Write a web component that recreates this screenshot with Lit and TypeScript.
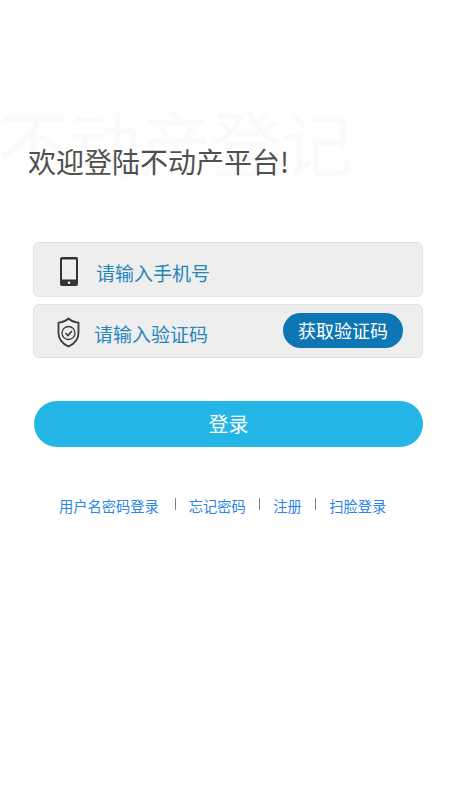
import { LitElement, html, css } from "lit";
import { customElement } from "lit/decorators.js";

@customElement("app-root")
export class AppRoot extends LitElement {
  static styles = css`
    :host {
      display: block;
      width: 455px;
      height: 795px;
      background: #fff;
      overflow: hidden;
      font-family: "Noto Sans CJK SC", "Liberation Sans", sans-serif;
    }
    .page {
      position: relative;
      display: flex;
      flex-direction: column;
      height: 795px;
      box-sizing: border-box;
      padding-top: 141px;
    }
    .watermark {
      position: absolute;
      left: -2px;
      top: 90px;
      font-size: 71px;
      line-height: 100px;
      color: #fafafa;
      white-space: nowrap;
    }
    .title {
      position: relative;
      margin: 0 0 0 28px;
      font-size: 28px;
      line-height: 40px;
      font-weight: 400;
      color: #505050;
      white-space: nowrap;
    }
    .fields {
      display: flex;
      flex-direction: column;
      gap: 7px;
      margin: 61px 32px 0 33px;
    }
    .field {
      display: flex;
      align-items: center;
      box-sizing: border-box;
      background: #eeeeee;
      border: 1px solid #e3e3e3;
      border-radius: 6px;
    }
    .phone { height: 55px; padding-left: 26px; }
    .code { height: 54px; padding-left: 23px; padding-right: 19px; }
    .ph {
      font-size: 19px;
      line-height: 26px;
      color: #2585bd;
      white-space: nowrap;
    }
    .phone .ph { margin-left: 18px; position: relative; top: 3px; }
    .code .ph { margin-left: 14px; position: relative; top: 3px; flex: 1; }
    svg { display: block; flex: none; }
    .phone svg { margin-top: 3px; }
    .code svg { margin-top: 3px; }
    .send {
      width: 120px;
      height: 35px;
      border-radius: 18px;
      background: #0e76b4;
      color: #fff;
      font-size: 18px;
      line-height: 35px;
      text-align: center;
      margin-top: -1px;
    }
    .login {
      margin: 43px 32px 0 34px;
      height: 46px;
      border-radius: 23px;
      background: #22b5e6;
      color: #fff;
      font-size: 20px;
      line-height: 46px;
      text-align: center;
    }
    .links {
      display: flex;
      align-items: center;
      margin: 48px 0 0 59px;
      font-size: 14.25px;
      line-height: 22px;
      color: #2b84e6;
      white-space: nowrap;
    }
    .sep {
      width: 1px;
      height: 12px;
      background: #808080;
      margin: -5px 13px 0 13.5px;
    }
    .sep.first { margin-left: 16px; }
  `;

  render() {
    return html`
      <div class="page">
        <div class="watermark">不动产登记</div>
        <h1 class="title">欢迎登陆不动产平台!</h1>
        <div class="fields">
          <div class="field phone">
            <svg width="18" height="29" viewBox="0 0 18 29">
              <rect x="0" y="0" width="18" height="29" rx="2" fill="#333"></rect>
              <rect x="2" y="2.5" width="14" height="20" fill="#eee"></rect>
              <circle cx="9" cy="25.7" r="1.3" fill="#eee"></circle>
            </svg>
            <span class="ph">请输入手机号</span>
          </div>
          <div class="field code">
            <svg width="23" height="31" viewBox="0 0 23 31" fill="none" stroke="#3a3a3a">
              <path d="M11.5 1.5 C14 3.8 17.5 5.2 21.5 5.6 L21.5 16 C21.5 22.5 17 27 11.5 29.5 C6 27 1.5 22.5 1.5 16 L1.5 5.6 C5.5 5.2 9 3.8 11.5 1.5 Z" stroke-width="1.8" stroke-linejoin="round"></path>
              <circle cx="11.5" cy="16" r="6.5" stroke-width="1.3"></circle>
              <path d="M8.5 16 L11 18.5 L15 14" stroke-width="1.6"></path>
            </svg>
            <span class="ph">请输入验证码</span>
            <div class="send">获取验证码</div>
          </div>
        </div>
        <div class="login">登录</div>
        <div class="links">
          <span>用户名密码登录</span><i class="sep first"></i>
          <span>忘记密码</span><i class="sep"></i>
          <span>注册</span><i class="sep"></i>
          <span>扫脸登录</span>
        </div>
      </div>
    `;
  }
}
